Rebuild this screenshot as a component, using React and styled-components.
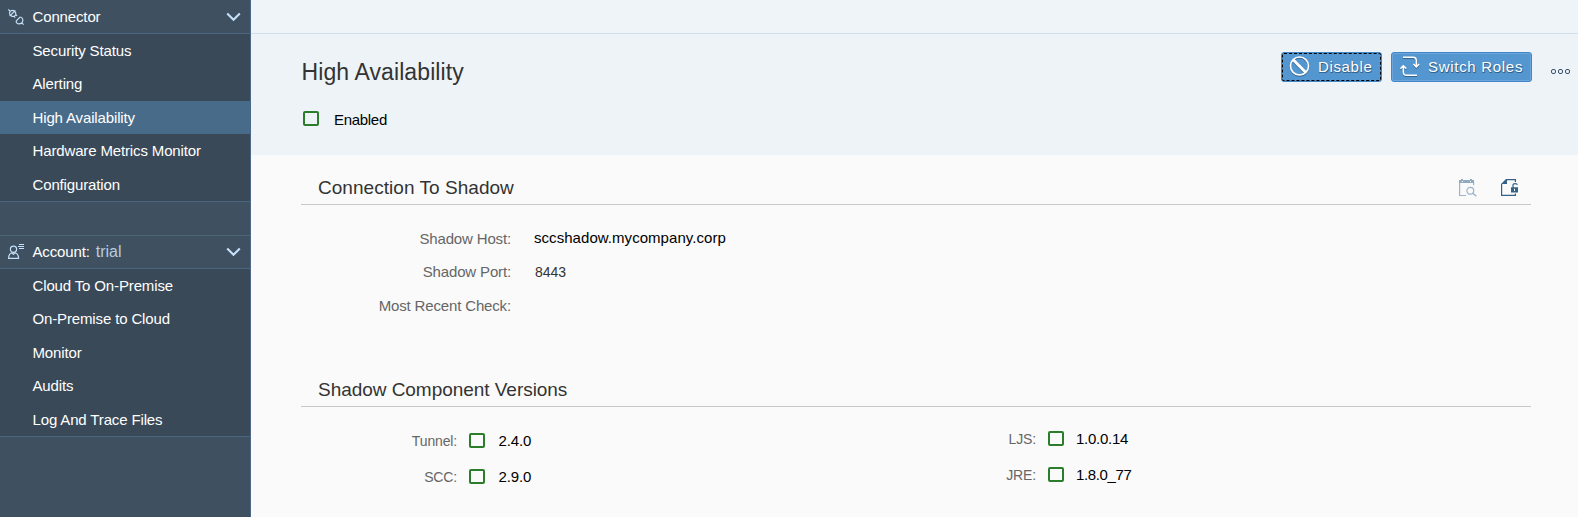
import React from "react";
import styled, { createGlobalStyle } from "styled-components";

const GlobalStyle = createGlobalStyle`
  * { box-sizing: border-box; }
  body { margin: 0; background: #fafafa; font-family: "Liberation Sans", Arial, sans-serif; overflow: hidden; }
`;

const Page = styled.div`
  display: flex;
  width: 1578px;
  height: 517px;
`;

const Sidebar = styled.nav`
  flex: none;
  width: 251px;
  background: #3f5161;
  border-right: 1px solid #4c6a87;
`;

const GroupHeader = styled.div`
  display: flex;
  align-items: center;
  height: 34px;
  padding: 0 9px 0 8px;
  border-top: ${(p) => (p.$line ? "1px solid #4d6579" : "none")};
  border-bottom: 1px solid #4a6680;
  color: #fff;
  font-size: 15px;
  letter-spacing: -0.14px;
  white-space: pre;
  svg { flex: none; }
`;

const GroupTitle = styled.span`
  flex: 1;
  margin-left: 8.5px;
`;

const AccountName = styled.span`
  margin-left: 6px;
  color: #b9cbdc;
  font-size: 16px;
  letter-spacing: 0;
`;

const MenuList = styled.div`
  display: flex;
  flex-direction: column;
  height: 168px;
  background: #394958;
  border-bottom: 1px solid #4a6680;
`;

const MenuItem = styled.div`
  flex: 1;
  padding-left: 32.5px;
  line-height: 33px;
  color: #fff;
  background: ${(p) => (p.$active ? "#486b8a" : "transparent")};
  font-size: 15px;
  letter-spacing: -0.14px;
`;

const Gap = styled.div`
  height: 33px;
`;

const Main = styled.main`
  flex: 1;
  min-width: 0;
`;

const TopBar = styled.div`
  height: 34px;
  background: #eff4f8;
  border-bottom: 1px solid #d3dfeb;
`;

const PageHeader = styled.header`
  display: flex;
  justify-content: space-between;
  height: 121px;
  padding: 18px 8px 0 50px;
  background: #eef3f8;
`;

const Title = styled.h1`
  margin: 6px 0 0;
  padding-left: 0.5px;
  font-size: 23px;
  font-weight: 400;
  line-height: 28px;
  color: #333;
  letter-spacing: 0.1px;
`;

const EnabledRow = styled.div`
  display: flex;
  align-items: center;
  gap: 15px;
  margin: 25px 0 0 2px;
`;

const Value = styled.span`
  color: ${(p) => p.$color || "#000"};
  font-size: ${(p) => p.$size || 15}px;
  line-height: 18px;
  letter-spacing: ${(p) => p.$spacing || 0}px;
`;

const StatusBox = styled.span`
  flex: none;
  width: 16px;
  height: 15px;
  margin-bottom: ${(p) => p.$lift || 0}px;
  border: 2px solid #2b7d2b;
  border-radius: 2px;
`;

const Actions = styled.div`
  display: flex;
  height: 30px;
`;

const ActionButton = styled.button`
  display: flex;
  align-items: center;
  width: ${(p) => p.$width}px;
  height: 30px;
  margin: 0 ${(p) => p.$after}px 0 0;
  padding: 0 0 0 ${(p) => p.$inset}px;
  border: 1px solid #4186c8;
  border-radius: 3px;
  outline: ${(p) => (p.$focused ? "1px dashed #000" : "1px solid #6ba5da")};
  outline-offset: -2px;
  background: #5496cf;
  color: #fff;
  font: 15px/20px "Liberation Sans", Arial, sans-serif;
  letter-spacing: ${(p) => p.$spacing}px;
  text-shadow: 0 1px 0 #34658f, 1px 1px 0 #34658f;
  white-space: nowrap;
  svg { flex: none; margin: -2px ${(p) => p.$iconGap}px 0 0; filter: drop-shadow(0 1px 0 #34658f); }
`;

const Overflow = styled.div`
  display: flex;
  gap: 2px;
  margin-top: 17px;
  span { width: 5px; height: 5px; border: 1px solid #38536e; border-radius: 2px; }
`;

const Section = styled.section`
  height: ${(p) => p.$height}px;
  padding: ${(p) => p.$top || 0}px 47px 0 50px;
`;

const SectionHead = styled.div`
  display: flex;
  align-items: center;
  justify-content: space-between;
  height: 39px;
  padding: 6px 12px 0 17px;
  border-bottom: 1px solid #c8c8c8;
  color: #333;
`;

const SectionTitle = styled.h2`
  margin: 0;
  font-size: 19px;
  font-weight: 400;
  line-height: 24px;
  letter-spacing: ${(p) => p.$spacing}px;
`;

const SectionTools = styled.div`
  display: flex;
  gap: 24px;
`;

const Fields = styled.div`
  display: grid;
  grid-template-columns: 210px 1fr;
  grid-auto-rows: 33.5px;
  column-gap: 23px;
  padding-top: 17px;
  align-items: center;
`;

const Label = styled.span`
  color: #666;
  font-size: ${(p) => p.$size || 15}px;
  letter-spacing: -0.15px;
  text-align: right;
  white-space: nowrap;
`;

const HostValue = styled(Value)`
  padding-bottom: 2px;
`;

const PortLabel = styled(Label)`
  padding-bottom: 1px;
`;

const PortValue = styled(Value)`
  padding: 0 0 1px 1px;
`;

const Versions = styled.div`
  display: grid;
  grid-template-columns: 578px 1fr;
  padding-top: 15px;
`;

const VersionColumn = styled.div`
  display: grid;
  grid-template-columns: ${(p) => p.$label}px 16px 1fr;
  grid-auto-rows: 36px;
  align-items: center;
  align-content: start;
  column-gap: 12px;
  margin-top: ${(p) => p.$top}px;
  ${Value} { margin-left: ${(p) => p.$inset}px; }
`;

const Chevron = () => (
  <svg width="15" height="10" viewBox="0 0 15 10" fill="none" stroke="#c5e0f8" strokeWidth="2.1">
    <path d="M1.2 1.5 7.5 7.8 13.8 1.5" />
  </svg>
);

const PlugIcon = () => (
  <svg width="16" height="16" viewBox="0 0 16 16" fill="none" stroke="#c5e0f8" strokeWidth="1.15">
    <path d="M.3.5 2.4 2.5M1.6 7.1 7.4 1.3M2.4 6.2C1.3 4.8 1.4 3.3 2.4 2.4S5 1.1 6.5 2.2M2.6 6.2 4 7.4H6.2L7.7 5.9V3.6L6.5 2.2M5.9 7.4 7.2 8.7M7.7 5.4 9.1 6.8" />
    <path d="M7.8 12.3 12.3 7.8M8.3 11.8V13.4L9.6 14.7M11.9 8.2H13.1L14.5 9.6M9.6 14.7C11.3 15 12.8 14.7 13.8 13.8S15.1 11.5 14.5 9.6M13.8 13.8 15.6 15.6" />
  </svg>
);

const AccountIcon = () => (
  <svg width="16" height="16" viewBox="0 0 16 16" fill="none" stroke="#c5e0f8" strokeWidth="1.2">
    <circle cx="5.5" cy="5.3" r="3.1" />
    <path d="M3.6 8.8C1.3 9.6.6 11 .6 14.4H10.6C10.6 11 9.7 9.6 7.4 8.8L5.5 10.2Z" />
    <path d="M11 .5H16M10 2.5H16M11 4.5H16" />
  </svg>
);

const BanIcon = () => (
  <svg width="21" height="21" viewBox="0 0 21 21" fill="none" stroke="#fff" strokeWidth="1.6">
    <circle cx="10.5" cy="10" r="9" />
    <path d="M4.2 3.8 16.8 16.4" strokeWidth="2.8" />
  </svg>
);

const SwitchIcon = () => (
  <svg width="20" height="21" viewBox="0 0 20 21" fill="none" stroke="#fff" strokeWidth="1.5">
    <path d="M3 1.2H13Q16.3 1.2 16.3 4.5V10.5M13.4 8 16.3 10.9 19.2 8" />
    <path d="M17 19.2H6.6Q3.3 19.2 3.3 15.9V10M.4 12.6 3.3 9.7 6.2 12.6" />
  </svg>
);

const CheckIcon = () => (
  <svg width="18" height="18" viewBox="0 0 18 18" fill="none" stroke="#9bb4cb" strokeWidth="1.2">
    <path d="M.6 2V16.5H7M14.6 3V6" />
    <path d="M0 1H2V0H4V1H11V0H13V1H15V4H0Z" fill="#8faac3" stroke="none" />
    <path d="M3 2.5H4M11 2.5H12" stroke="#fafafa" />
    <circle cx="11.3" cy="11.8" r="3.4" />
    <path d="M13.8 14.2 17.3 17.3" strokeWidth="1.5" />
  </svg>
);

const CertificateIcon = () => (
  <svg width="18" height="18" viewBox="0 0 18 18" fill="none" stroke="#346187" strokeWidth="1.2">
    <path d="M.6 5V16.4H14.4V14.5M5 .6H14.4V3" />
    <path d="M0 5 5 0H6V5Z" fill="#346187" stroke="none" />
    <path d="M12 9V6.5Q12 4.7 14.2 4.7T16 6" />
    <path fillRule="evenodd" d="M10 8.3H17V13.5H10ZM13 9.7V12H14V9.7Z" fill="#346187" stroke="none" />
  </svg>
);

const connectorItems = ["Security Status", "Alerting", "High Availability", "Hardware Metrics Monitor", "Configuration"];
const accountItems = ["Cloud To On-Premise", "On-Premise to Cloud", "Monitor", "Audits", "Log And Trace Files"];

const Menu = ({ items, active }) => (
  <MenuList>
    {items.map((item) => (
      <MenuItem key={item} $active={item === active}>{item}</MenuItem>
    ))}
  </MenuList>
);

const Version = ({ label, value, spacing }) => (
  <>
    <Label $size={14}>{label}:</Label>
    <StatusBox $lift={1} />
    <Value $spacing={spacing}>{value}</Value>
  </>
);

export default function App() {
  return (
    <Page>
      <GlobalStyle />
      <Sidebar>
        <GroupHeader>
          <PlugIcon />
          <GroupTitle>Connector</GroupTitle>
          <Chevron />
        </GroupHeader>
        <Menu items={connectorItems} active="High Availability" />
        <Gap />
        <GroupHeader $line>
          <AccountIcon />
          <GroupTitle>Account:<AccountName>trial</AccountName></GroupTitle>
          <Chevron />
        </GroupHeader>
        <Menu items={accountItems} />
      </Sidebar>
      <Main>
        <TopBar />
        <PageHeader>
          <div>
            <Title>High Availability</Title>
            <EnabledRow>
              <StatusBox $lift={3} />
              <Value $spacing={-0.3}>Enabled</Value>
            </EnabledRow>
          </div>
          <Actions>
            <ActionButton $width={101} $after={9} $inset={7} $iconGap={8} $spacing={0.65} $focused>
              <BanIcon />Disable
            </ActionButton>
            <ActionButton $width={141} $after={19} $inset={8} $iconGap={8} $spacing={0.7}>
              <SwitchIcon />Switch Roles
            </ActionButton>
            <Overflow><span /><span /><span /></Overflow>
          </Actions>
        </PageHeader>
        <Section $top={11} $height={213}>
          <SectionHead>
            <SectionTitle $spacing={0.04}>Connection To Shadow</SectionTitle>
            <SectionTools><CheckIcon /><CertificateIcon /></SectionTools>
          </SectionHead>
          <Fields>
            <Label>Shadow Host:</Label>
            <HostValue $spacing={0.05}>sccshadow.mycompany.corp</HostValue>
            <PortLabel>Shadow Port:</PortLabel>
            <PortValue $size={14} $color="#333">8443</PortValue>
            <Label>Most Recent Check:</Label>
          </Fields>
        </Section>
        <Section $height={149}>
          <SectionHead>
            <SectionTitle $spacing={-0.04}>Shadow Component Versions</SectionTitle>
          </SectionHead>
          <Versions>
            <VersionColumn $label={156} $top={1} $inset={1.5}>
              <Version label="Tunnel" value="2.4.0" spacing={-0.1} />
              <Version label="SCC" value="2.9.0" spacing={-0.1} />
            </VersionColumn>
            <VersionColumn $label={157} $top={-1} $inset={0}>
              <Version label="LJS" value="1.0.0.14" spacing={-0.25} />
              <Version label="JRE" value="1.8.0_77" spacing={-0.35} />
            </VersionColumn>
          </Versions>
        </Section>
      </Main>
    </Page>
  );
}
